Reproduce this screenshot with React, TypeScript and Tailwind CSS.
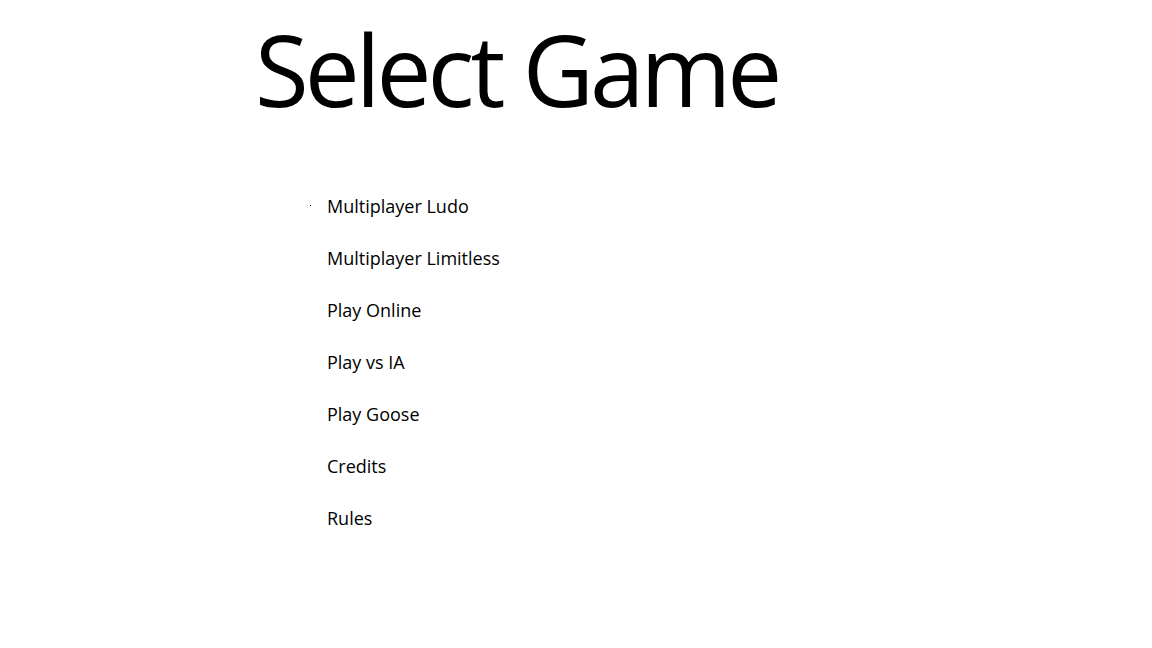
import React from "react";

const items = [
  "Multiplayer Ludo",
  "Multiplayer Limitless",
  "Play Online",
  "Play vs IA",
  "Play Goose",
  "Credits",
  "Rules",
];

export default function App() {
  return (
    <div
      className="w-[1152px] h-[648px] bg-white text-black overflow-hidden"
      style={{ fontFamily: '"Open Sans", "Noto Sans", sans-serif' }}
    >
      <h1 className="pl-[255px] pt-[14px] text-[98px] leading-[110px] font-normal tracking-[-4px]">
        Select Game
      </h1>
      <ul className="pl-[327px] pt-[70px] flex flex-col gap-[27px]">
        {items.map((t, i) => (
          <li key={t} className="relative text-[18px] leading-[25px]">
            {i === 0 && (
              <span className="absolute left-[-17px] top-[11px] w-[1px] h-[1px] bg-black" />
            )}
            {t}
          </li>
        ))}
      </ul>
    </div>
  );
}
